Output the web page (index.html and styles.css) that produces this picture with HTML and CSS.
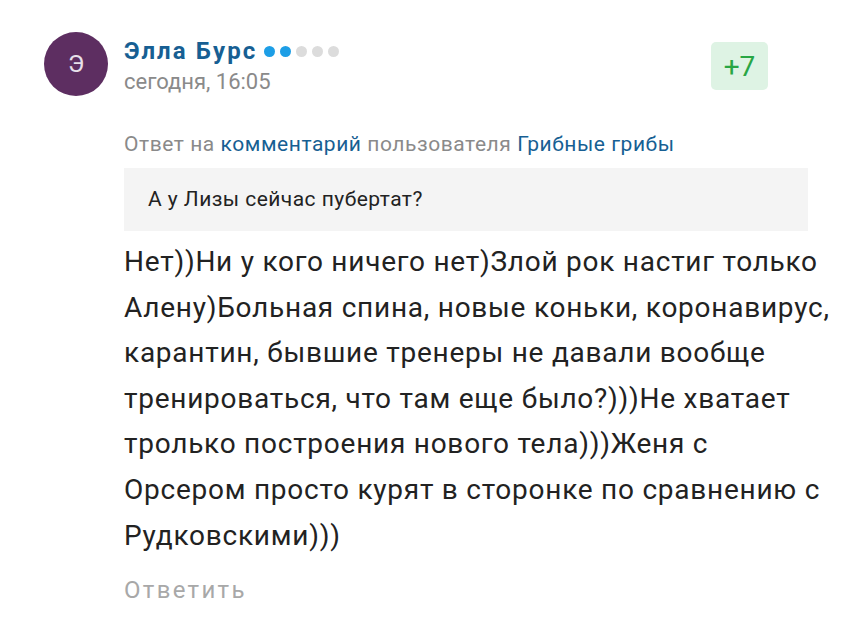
FILE: index.html
```html
<!DOCTYPE html>
<html lang="ru">
<head>
  <meta charset="UTF-8">
  <title>Комментарий</title>
  <link rel="stylesheet" href="styles.css">
</head>
<body>
  <div class="comment">
    <div class="avatar">Э</div>
    <div class="comment-body">
      <div class="comment-head">
        <div class="author">
          <div class="author-line">
            <a href="#" class="author-name">Элла Бурс</a>
            <span class="rating-dots">
              <i class="dot on"></i><i class="dot on"></i><i class="dot"></i><i class="dot"></i><i class="dot"></i>
            </span>
          </div>
          <div class="date">сегодня, 16:05</div>
        </div>
        <div class="score">+7</div>
      </div>

      <div class="reply-to">
        Ответ на <a href="#">комментарий</a> пользователя <a href="#">Грибные грибы</a>
      </div>
      <div class="quote">А у Лизы сейчас пубертат?</div>

      <p class="text">Нет))Ни у кого ничего нет)Злой рок настиг только Алену)Больная спина, новые коньки, коронавирус, карантин, бывшие тренеры не давали вообще тренироваться, что там еще было?)))Не хватает тролько построения нового тела)))Женя с Орсером просто курят в сторонке по сравнению с Рудковскими)))</p>

      <a href="#" class="answer">Ответить</a>
    </div>
  </div>
</body>
</html>
```

FILE: styles.css
```css
* {
  margin: 0;
  padding: 0;
  box-sizing: border-box;
}

body {
  background-color: #fff;
  font-family: Roboto, "Liberation Sans", sans-serif;
  color: #222;
}

a {
  text-decoration: none;
}

/* Comment layout */
.comment {
  display: flex;
  padding: 32px 0 0 44px;
}
.avatar {
  width: 64px;
  height: 64px;
  flex-shrink: 0;
  border-radius: 50%;
  background-color: #5d2e61;
  color: #e8e0ea;
  font-size: 24px;
  display: flex;
  align-items: center;
  justify-content: center;
}
.comment-body {
  width: 720px;
  margin-left: 16px;
}

/* Header */
.comment-head {
  display: flex;
  justify-content: space-between;
  align-items: flex-start;
  padding-right: 76px;
}
.author-line {
  display: flex;
  align-items: center;
  height: 34px;
  margin-top: 2px;
}
.author-name {
  font-size: 24px;
  font-weight: bold;
  letter-spacing: 2.1px;
  color: #175f93;
}
.rating-dots {
  display: flex;
  gap: 5px;
  margin-left: 7px;
}
.dot {
  width: 11px;
  height: 11px;
  border-radius: 50%;
  background-color: #dcdcdc;
}
.dot.on {
  background-color: #1d9ee6;
}
.date {
  font-size: 22px;
  color: #8a8a8a;
  margin-top: 1px;
}
.score {
  margin-top: 10px;
  width: 57px;
  height: 48px;
  border-radius: 5px;
  background-color: #def3e4;
  color: #29a645;
  font-size: 28px;
  display: flex;
  align-items: center;
  justify-content: center;
}

/* Reply info */
.reply-to {
  margin-top: 38px;
  font-size: 21px;
  letter-spacing: 0.55px;
  color: #8a8a8a;
}
.reply-to a {
  color: #175f93;
}
.quote {
  margin-top: 12px;
  margin-right: 36px;
  background-color: #f4f4f4;
  padding: 19px 24px 20px;
  font-size: 21px;
  letter-spacing: 0.45px;
  color: #222;
}

/* Body text */
.text {
  margin-top: 8px;
  margin-right: 9px;
  font-size: 28px;
  line-height: 45.6px;
  letter-spacing: 0.75px;
  color: #222;
}
.answer {
  display: inline-block;
  margin-top: 18px;
  font-size: 24px;
  letter-spacing: 2.3px;
  color: #a8a8a8;
}
```
